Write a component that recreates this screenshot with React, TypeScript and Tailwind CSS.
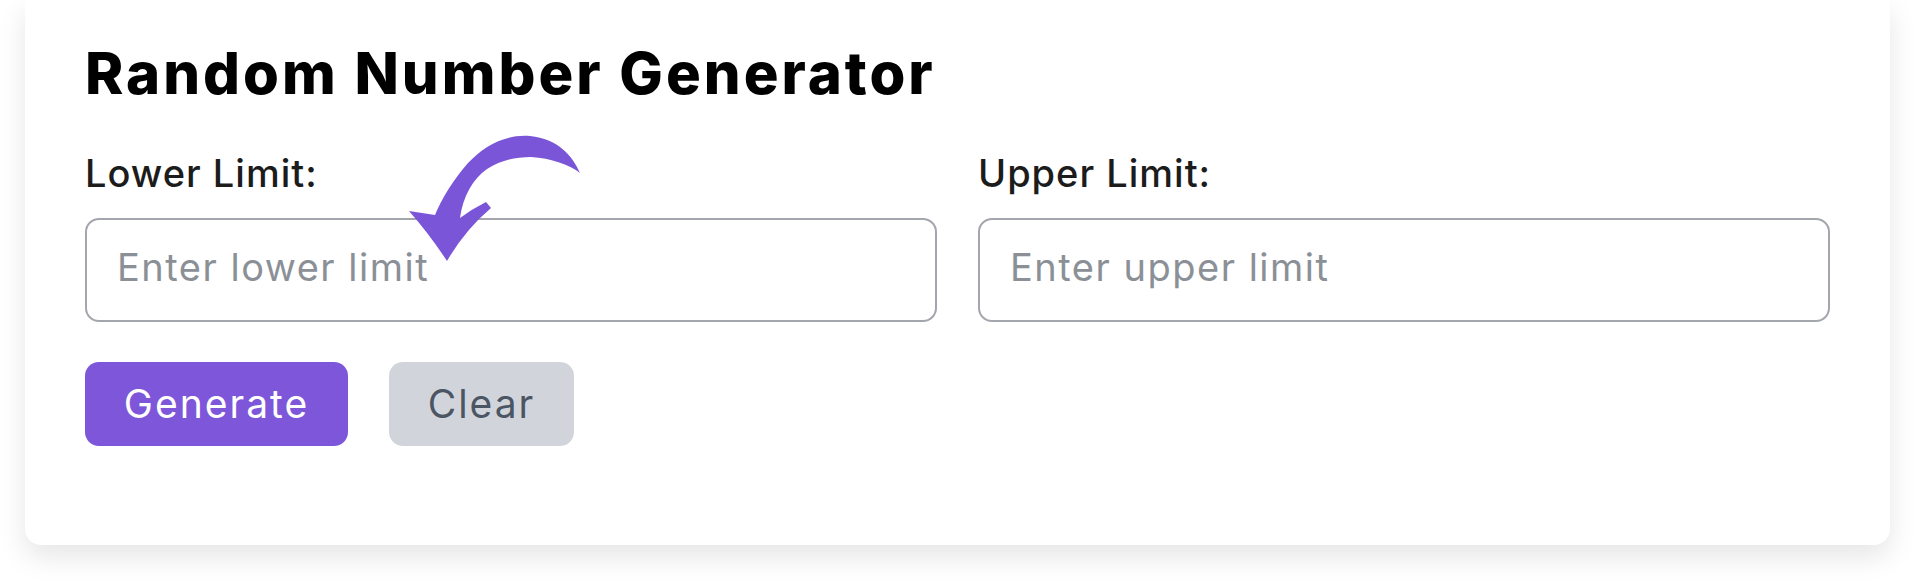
import React from "react";

function Arrow() {
  return (
    <svg
      className="absolute left-[375px] top-[125px] pointer-events-none"
      width="190"
      height="145"
      viewBox="0 0 190 145"
    >
      <path
        d="M180,48 C172,30 158,14 130,11 C105,9 84,21 68,38 C53,55 41,75 35,90 L9,86 Q30,110 47,136 Q65,105 91,83 L86,77 Q72,84 60,93 C63,71 73,54 87,44 C101,35 116,32 131,32 C151,33 170,40 180,48 Z"
        fill="#7b55d8"
      />
    </svg>
  );
}

export default function App() {
  const font = { fontFamily: "Inter, 'Open Sans', sans-serif" };
  return (
    <div className="w-[1920px] h-[585px] bg-white overflow-hidden" style={font}>
      <div className="relative ml-[25px] w-[1865px] bg-white rounded-b-[16px] shadow-[0_12px_28px_rgba(0,0,0,0.10)] px-[60px] pt-[44px] pb-[99px]">
        <h1 className="text-[58px] leading-none font-extrabold text-black tracking-[3px]">
          Random Number Generator
        </h1>
        <div className="grid grid-cols-2 gap-x-[41px] mt-[52px]">
          <div className="flex flex-col">
            <label className="text-[38px] leading-none font-medium text-[#1c1c1c] tracking-[1px]">Lower Limit:</label>
            <input
              className="mt-[26px] h-[104px] w-full rounded-[14px] border-2 border-[#a3a6ac] px-[30px] pb-[6px] text-[38px] tracking-[1.5px] text-[#333] placeholder:text-[#8b9097] outline-none"
              placeholder="Enter lower limit"
            />
          </div>
          <div className="flex flex-col">
            <label className="text-[38px] leading-none font-medium text-[#1c1c1c] tracking-[1px]">Upper Limit:</label>
            <input
              className="mt-[26px] h-[104px] w-full rounded-[14px] border-2 border-[#a3a6ac] px-[30px] pb-[6px] text-[38px] tracking-[1.5px] text-[#333] placeholder:text-[#8b9097] outline-none"
              placeholder="Enter upper limit"
            />
          </div>
        </div>
        <div className="flex gap-[41px] mt-[40px]">
          <button className="h-[84px] w-[263px] rounded-[14px] bg-[#7d56d9] text-white text-[39px] tracking-[2px]">
            Generate
          </button>
          <button className="h-[84px] w-[185px] rounded-[14px] bg-[#d1d5db] text-[#4b5563] text-[39px] tracking-[2px]">
            Clear
          </button>
        </div>
        <Arrow />
      </div>
    </div>
  );
}
